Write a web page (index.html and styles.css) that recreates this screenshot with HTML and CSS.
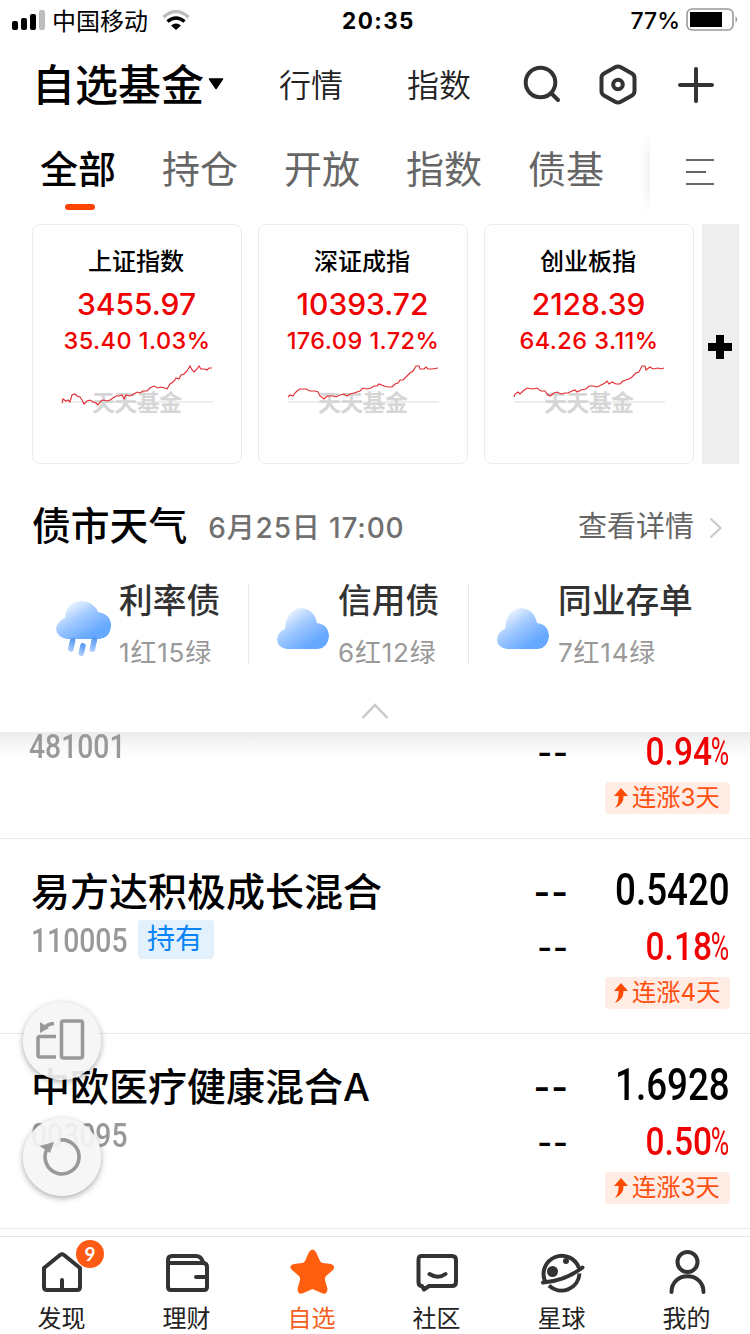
FILE: index.html
```html
<!DOCTYPE html>
<html lang="zh-CN">
<head>
<meta charset="utf-8">
<title>自选基金</title>
<link rel="stylesheet" href="styles.css">
</head>
<body>
<div class="app">
  <header class="status">
    <div class="status-left">
      <svg class="signal" width="34" height="20" viewBox="0 0 34 20"><rect x="0" y="11" width="6" height="9" rx="2"/><rect x="9" y="8" width="6" height="12" rx="2"/><rect x="18" y="4" width="6" height="16" rx="2"/><rect x="27" y="0" width="6" height="20" rx="2" fill="#bdbdbd"/></svg>
      <span class="carrier">中国移动</span>
      <svg class="wifi" width="28" height="20" viewBox="0 0 28 20"><path d="M1.500 7.200Q14-4 26.500 7.200" fill="none" stroke="#bdbdbd" stroke-width="3.400"/><path d="M5.500 11.500Q14 4.300 22.500 11.500" fill="none" stroke="#000" stroke-width="3.400"/><path d="M9 15.500Q14 11.500 19 15.500L14 20Z"/></svg>
    </div>
    <span class="clock">20:35</span>
    <div class="status-right">
      <span class="percent">77%</span>
      <svg width="53" height="24" viewBox="0 0 53 24"><rect x="1" y="1" width="46" height="21" rx="5" fill="none" stroke="#999" stroke-width="1.600"/><rect x="4" y="4" width="32" height="15"/><path d="M49.500 8Q53 11.500 49.500 15Z" fill="#999"/></svg>
    </div>
  </header>

  <nav class="topnav">
    <h1 class="title">自选基金</h1>
    <svg class="caret" width="16" height="12" viewBox="0 0 16 12"><path d="M1.500 1H14.500L8 10.500Z" stroke="#000" stroke-width="1.500" stroke-linejoin="round"/></svg>
    <span class="navlink first">行情</span>
    <span class="navlink">指数</span>
    <svg class="nav-icons" width="194" height="44" viewBox="520 62 194 44" fill="none" stroke="#333" stroke-width="4" stroke-linecap="round" stroke-linejoin="round">
      <circle cx="540.500" cy="82.500" r="14.800"/><path d="M551.500 93.500L558 100"/>
      <path d="M615.200 67.200Q618 65.600 620.800 67.200L632 73.500Q634.500 75 634.500 78V91Q634.500 94 632 95.500L620.800 101.800Q618 103.400 615.200 101.800L604 95.500Q601.500 94 601.500 91V78Q601.500 75 604 73.500Z"/><circle cx="618" cy="84.500" r="4.800"/>
      <path d="M680 85H712M696 69V101"/>
    </svg>
  </nav>

  <div class="tabs">
    <span class="tab active">全部</span>
    <span class="tab">持仓</span>
    <span class="tab">开放</span>
    <span class="tab">指数</span>
    <span class="tab">债基</span>
    <div class="tabs-more"><svg width="28" height="28" viewBox="0 0 28 28" fill="none" stroke="#666" stroke-width="2"><path d="M0 2H28M0 14H20M0 26H28"/></svg></div>
  </div>

  <section class="indices">
    <article class="card">
      <span class="card-name">上证指数</span>
      <span class="card-value">3455.97</span>
      <span class="card-change">35.40 1.03%</span>
      <svg class="spark" width="154" height="54" viewBox="60 362 154 54"><path class="base" d="M62 402H213"/><text x="92" y="410.500" textLength="90">天天基金</text><path class="line" d="M62 403L63 399L66 401L68 400L70 402L72 395L75 394L77 396L80 397L82 400L84 404L87 401L90 400L93 402L96 403L98 405L101 401L104 400L107 401L110 400L113 398L116 396L119 396L122 395L124 399L126 395L130 396L134 394L137 392L140 393L143 391L147 391L150 388L154 386L158 388L161 387L165 388L167 389L170 384L173 382L175 380L176 378L179 379L181 375L184 374L187 371L190 366L192 370L194 372L197 369L199 366L201 369L205 369L207 370L209 368L212 368"/></svg>
    </article>
    <article class="card">
      <span class="card-name">深证成指</span>
      <span class="card-value">10393.72</span>
      <span class="card-change">176.09 1.72%</span>
      <svg class="spark" width="154" height="54" viewBox="60 362 154 54"><path class="base" d="M62 402H213"/><text x="92" y="410.500" textLength="90">天天基金</text><path class="line" d="M62 397L64 395L67 396L69 393L71 391L74 389L80 389L84 391L89 391L92 392L94 396L98 399L101 396L107 396L110 397L114 395L118 394L121 396L124 394L128 393L131 392L134 391L137 388L141 389L145 388L148 386L151 386L153 384L158 386L162 387L166 387L169 384L172 383L174 380L177 380L180 377L184 373L187 371L190 366L193 366L194 369L198 369L200 367L202 369L206 369L212 368"/></svg>
    </article>
    <article class="card">
      <span class="card-name">创业板指</span>
      <span class="card-value">2128.39</span>
      <span class="card-change">64.26 3.11%</span>
      <svg class="spark" width="154" height="54" viewBox="60 362 154 54"><path class="base" d="M62 402H213"/><text x="92" y="410.500" textLength="90">天天基金</text><path class="line" d="M62 397L63 394L66 392L68 394L71 391L75 388L81 389L85 388L89 391L93 391L95 394L98 396L102 393L105 392L109 394L113 393L116 393L120 391L123 390L125 392L129 390L134 389L137 386L141 386L145 387L149 385L153 383L155 381L157 384L160 382L164 384L168 384L171 381L174 380L177 379L180 377L184 373L187 372L190 366L193 366L194 370L198 367L201 369L206 368L209 369L212 368"/></svg>
    </article>
    <div class="add-index"><svg width="24" height="24" viewBox="0 0 24 24"><path d="M8 0H16V8H24V16H16V24H8V16H0V8H8Z"/></svg></div>
  </section>

  <section class="weather">
    <div class="weather-head">
      <h2 class="weather-title">债市天气</h2>
      <span class="weather-date">6月25日 17:00</span>
      <span class="weather-more">查看详情</span>
      <svg width="14" height="22" viewBox="0 0 14 22" fill="none" stroke="#c8c8c8" stroke-width="2"><path d="M1.500 1.500L11.500 11L1.500 20.500"/></svg>
    </div>
    <div class="weather-items">
      <div class="weather-item rate">
        <svg class="cloud" width="60" height="60" viewBox="54 598 60 60">
          <defs><linearGradient id="sky" x1="0.100" y1="0.150" x2="0.700" y2="0.850"><stop offset="0" stop-color="#f2f8ff"/><stop offset=".45" stop-color="#a5cbff"/><stop offset="1" stop-color="#65a8ff"/></linearGradient><linearGradient id="rain" x1="0" y1="0" x2="0" y2="1"><stop offset="0" stop-color="#4f93ee"/><stop offset="1" stop-color="#b0d1ff"/></linearGradient></defs>
          <path fill="url(#sky)" d="M67 639Q57 637 56 629Q57 621 65 618Q66 602 82 601Q94 602 98 612Q111 614 111 626Q110 638 99 639Z"/>
          <g fill="url(#rain)"><rect x="69" y="638" width="5.500" height="14" rx="2.700" transform="rotate(12 72 645)"/><rect x="79.500" y="643" width="5.500" height="13" rx="2.700" transform="rotate(12 82 649)"/><rect x="90.500" y="637" width="5.500" height="15" rx="2.700" transform="rotate(12 93 645)"/></g>
        </svg>
        <div class="weather-text"><span class="kind">利率债</span><span class="count">1红15绿</span></div>
      </div>
      <div class="weather-item credit">
        <svg class="cloud" width="60" height="60" viewBox="273 598 60 60"><path fill="url(#sky)" d="M287 649Q278 648 277 640Q277 632 285 629Q286 610 301 608Q314 609 317 623Q328 624 329 636Q328 648 318 649Z"/></svg>
        <div class="weather-text"><span class="kind">信用债</span><span class="count">6红12绿</span></div>
      </div>
      <div class="weather-item deposit">
        <svg class="cloud" width="60" height="60" viewBox="273 598 60 60"><path fill="url(#sky)" d="M287 649Q278 648 277 640Q277 632 285 629Q286 610 301 608Q314 609 317 623Q328 624 329 636Q328 648 318 649Z"/></svg>
        <div class="weather-text"><span class="kind">同业存单</span><span class="count">7红14绿</span></div>
      </div>
    </div>
    <div class="collapse"><svg width="28" height="18" viewBox="0 0 28 18" fill="none" stroke="#c8c8c8" stroke-width="2.500"><path d="M1.500 16L14 3L26.500 16"/></svg></div>
  </section>

  <main class="funds">
    <article class="fund partial">
      <div class="fund-info"><div class="fund-meta"><span class="code">481001</span></div></div>
      <div class="fund-est"><span class="dash small">--</span></div>
      <div class="fund-nav">
        <span class="pct">0.94<i>%</i></span>
        <span class="streak"><svg width="16" height="22" viewBox="0 0 16 22"><path d="M8 1L15 9H10.500Q11 17 2 21Q6 16 5.500 9H1Z"/></svg>连涨3天</span>
      </div>
    </article>
    <article class="fund">
      <div class="fund-info"><span class="fund-name">易方达积极成长混合</span><div class="fund-meta"><span class="code">110005</span><span class="held">持有</span></div></div>
      <div class="fund-est"><span class="dash">--</span><span class="dash small">--</span></div>
      <div class="fund-nav">
        <span class="nav-value">0.5420</span><span class="pct">0.18<i>%</i></span>
        <span class="streak"><svg width="16" height="22" viewBox="0 0 16 22"><path d="M8 1L15 9H10.500Q11 17 2 21Q6 16 5.500 9H1Z"/></svg>连涨4天</span>
      </div>
    </article>
    <article class="fund">
      <div class="fund-info"><span class="fund-name">中欧医疗健康混合<span class="latin">A</span></span><div class="fund-meta"><span class="code">003095</span></div></div>
      <div class="fund-est"><span class="dash">--</span><span class="dash small">--</span></div>
      <div class="fund-nav">
        <span class="nav-value">1.6928</span><span class="pct">0.50<i>%</i></span>
        <span class="streak"><svg width="16" height="22" viewBox="0 0 16 22"><path d="M8 1L15 9H10.500Q11 17 2 21Q6 16 5.500 9H1Z"/></svg>连涨3天</span>
      </div>
    </article>
    <div class="floaters">
      <span class="floater"><svg width="78" height="78" viewBox="23 1003 78 78" fill="none" stroke="#999" stroke-width="3.600"><rect x="61.500" y="1022" width="21" height="37" rx="2"/><path d="M56 1037.500H40Q38 1037.500 38 1039.500V1056Q38 1058 40 1058H56"/><path d="M54 1024.500Q47 1025 43 1030"/><path d="M40 1023V1034L49 1029Z" fill="#999" stroke="none"/></svg></span>
      <span class="floater"><svg width="78" height="78" viewBox="23 1119 78 78" fill="none" stroke="#999" stroke-width="3.600"><path d="M60.500 1141A17 17 0 1 1 47 1150"/><path d="M39.500 1147L54 1143L50 1154Z" fill="#999" stroke="none"/></svg></span>
    </div>
  </main>

  <footer class="tabbar">
    <div class="tabitem"><svg width="48" height="48" viewBox="38 1248 48 48"><path d="M44 1268L60 1255Q62 1253.500 64 1255L80 1268V1287Q80 1290 77 1290H47Q44 1290 44 1287ZM62 1289V1280"/></svg><span>发现</span><b class="badge">9</b></div>
    <div class="tabitem"><svg width="48" height="48" viewBox="163 1248 48 48"><path d="M168 1263H203Q207 1263 207 1267V1287Q207 1290 204 1290H171Q168 1290 168 1287V1260Q168 1256 172 1256H196Q201 1256 203 1262M207 1277H196"/></svg><span>理财</span></div>
    <div class="tabitem active"><svg width="48" height="48" viewBox="288 1248 48 48"><path d="M309 1252Q312.500 1247 316 1252L320 1261Q321 1263 323 1263L331 1264Q336 1265.500 333 1270L326 1276Q324.500 1278 325 1280L327.500 1289Q327 1295.500 321.500 1293L312.500 1289L303.500 1293Q298 1295.500 297.500 1289L300 1280Q300.500 1278 299 1276L292 1270Q288 1265.500 294 1264L302 1263Q304 1263 305 1261Z"/></svg><span>自选</span></div>
    <div class="tabitem"><svg width="48" height="48" viewBox="413 1248 48 48"><path d="M421 1256H452Q456 1256 456 1260V1282Q456 1286 452 1286H429L424 1289.500L422 1286Q418.500 1286 418.500 1282V1260Q418.500 1256 421 1256ZM429.500 1274Q438 1279.500 445.500 1274"/></svg><span>社区</span></div>
    <div class="tabitem"><svg width="48" height="48" viewBox="538 1248 48 48"><path d="M545 1281A18 18 0 1 1 578.500 1267"/><path stroke-linecap="butt" d="M549 1285.500A18 18 0 0 0 579.500 1273.500"/><path d="M543 1282.500Q565 1281 582.500 1267.500"/><circle class="solid" cx="552.500" cy="1271.500" r="5.500"/><circle class="solid" cx="566" cy="1261" r="3"/></svg><span>星球</span></div>
    <div class="tabitem"><svg width="48" height="48" viewBox="663 1248 48 48"><circle cx="687.500" cy="1262" r="10"/><path d="M671.500 1292C671.500 1271 703.500 1271 703.500 1292"/></svg><span>我的</span></div>
  </footer>
</div>
</body>
</html>
```
FILE: styles.css
```css
* { box-sizing: border-box; }
body { margin: 0; background: #fff; font-family: "Noto Sans CJK SC", sans-serif; font-weight: 400; color: #000; }
h1, h2 { margin: 0; }
svg { display: block; flex: none; }
span { white-space: nowrap; }
.app { width: 750px; height: 1334px; overflow: hidden; display: flex; flex-direction: column; }

.status { height: 40px; flex: none; display: grid; grid-template-columns: 1fr 80px 1fr; align-items: center; padding: 0 11px 0 12px; font-family: Inter, sans-serif; }
.status-left, .status-right { display: flex; align-items: center; }
.status-right { justify-content: flex-end; gap: 6px; }
.carrier { font: 400 24px/36px "Noto Sans CJK SC", sans-serif; margin: 0 14px 0 6px; }
.clock { text-align: center; font-weight: 700; font-size: 22.500px; letter-spacing: 1.400px; margin: 1px -3px 0 3px; }
.percent { font-size: 23px; font-weight: 500; margin-top: 1px; }

.topnav { height: 90px; flex: none; display: flex; align-items: center; padding-left: 32px; }
.title { font-size: 43px; font-weight: 500; line-height: 60px; margin-top: -7px; }
.caret { margin-left: 4px; margin-top: -2px; }
.navlink { font-size: 32px; font-weight: 350; color: #222; line-height: 44px; margin-left: 64px; margin-top: -4px; }
.navlink.first { margin-left: 55px; }
.nav-icons { margin-left: 49px; margin-top: -2px; }

.tabs { height: 94px; flex: none; display: flex; padding-left: 40px; gap: 46px; }
.tab { width: 76px; font-size: 38px; line-height: 74px; height: 74px; color: #666; }
.tab.active { color: #000; font-weight: 500; }
.tab.active::after { content: ""; display: block; width: 30px; height: 6px; margin: 0 auto; transform: translateX(2px); border-radius: 3px; background: #ff4400; }
.tabs-more { width: 100px; height: 84px; padding: 28px 0 0 36px; background: #fff; position: relative; }
.tabs-more::before { content: ""; position: absolute; right: 100%; top: 0; width: 10px; height: 84px; background: linear-gradient(to left, #f2f2f2, #fff); -webkit-mask-image: linear-gradient(transparent, #000 35%, #000 70%, transparent); mask-image: linear-gradient(transparent, #000 35%, #000 70%, transparent); }

.indices { display: flex; flex: none; height: 240px; padding-left: 32px; gap: 16px; }
.card { width: 210px; border: 1px solid #ececec; border-radius: 8px; display: flex; flex-direction: column; align-items: center; padding-top: 15px; }
.card-name { font-size: 24px; font-weight: 500; line-height: 40px; margin-right: 2px; }
.card-value { color: #f00000; font: 500 30px/44px Inter, sans-serif; margin-top: 2px; margin-right: 1px; }
.card-change { color: #f00000; font: 500 23.500px/30px Inter, sans-serif; letter-spacing: .45px; }
.spark { margin-top: 6px; }
.spark .base { stroke: #e8e8e8; stroke-width: 1.500; }
.spark text { font-size: 23px; font-weight: 700; fill: #d6d6d6; }
.spark .line { fill: none; stroke: #e02b30; stroke-width: 1.100; }
.add-index { width: 37px; margin-left: -8px; background: #eee; display: flex; align-items: center; justify-content: center; padding-top: 5px; padding-right: 2px; }

.weather { flex: none; height: 268px; display: flex; flex-direction: column; }
.weather-head { height: 120px; display: flex; align-items: center; padding: 0 27px 0 32px; }
.weather-title { font-size: 38.800px; font-weight: 500; line-height: 56px; margin-top: -3px; }
.weather-date { font: 500 28px/40px Inter, "Noto Sans CJK SC", sans-serif; letter-spacing: .85px; color: #707070; margin-left: 21px; margin-top: 8px; }
.weather-more { font-size: 29px; color: #666; line-height: 40px; margin-left: auto; margin-right: 15px; }
.weather-head svg { margin-top: 8px; }
.weather-items { height: 80px; display: flex; }
.weather-item { display: flex; padding-left: 54px; width: 249px; border-right: 1px solid #e8e8e8; }
.weather-item.credit { width: 220px; padding-left: 24px; }
.weather-item.deposit { border-right: 0; padding-left: 24px; }
.cloud { margin-top: 14px; margin-right: 5px; }
.weather-text { display: flex; flex-direction: column; gap: 14px; margin-top: -7px; }
.kind { font-size: 33.700px; line-height: 44px; color: #333; font-weight: 500; }
.count { font: 400 26px/36px Inter, "Noto Sans CJK SC", sans-serif; letter-spacing: .8px; color: #999; }
.collapse { display: flex; justify-content: center; padding-top: 38px; }

.funds { flex: none; height: 504px; position: relative; background: linear-gradient(#ebebeb, #f6f6f6 12px, #fff 26px); }
.fund { height: 195px; border-bottom: 1px solid #e8e8e8; display: grid; grid-template-columns: 1fr 110px 161px; padding: 21px 20px 0 31px; }
.fund.partial { height: 107px; padding: 0 20px 0 29px; }
.fund-info, .fund-est, .fund-nav { display: flex; flex-direction: column; }
.fund-est, .fund-nav { align-items: flex-end; }
.fund-name { font-size: 39px; font-weight: 500; line-height: 58px; height: 60px; }
.latin { font-family: Inter, sans-serif; font-size: 38px; }
.fund-meta { display: flex; height: 39px; gap: 13px; }
.partial .fund-meta { margin-top: -6px; }
.code { width: 94px; font: 500 33.500px/42px Roboto, sans-serif; color: #999; transform: scaleX(.845); transform-origin: left; }
.held { width: 76px; height: 39px; border-radius: 4px; background: #e3f1fd; color: #0a84f5; text-align: center; font-size: 28px; line-height: 35px; padding-right: 2px; }
.nav-value { font: 500 43.500px/61px Roboto, sans-serif; height: 60px; transform: scaleX(.845); transform-origin: right; }
.pct { font: 500 38.500px/53px Roboto, sans-serif; height: 52px; color: #f00000; transform: scaleX(.87); transform-origin: right; }
.pct i { display: inline-block; font-style: normal; font-weight: 400; transform: scaleX(.75); transform-origin: right; margin-left: -8px; }
.partial .pct { margin-top: -7px; }
.streak { width: 125px; height: 32px; margin-top: 5px; border-radius: 4px; background: #ffece5; color: #ff5010; display: flex; align-items: center; gap: 3px; padding: 0 0 2px 8px; font: 400 24.300px/30px Inter, "Noto Sans CJK SC", sans-serif; }
.streak svg { fill: #ff4a00; margin-top: 2px; }
.dash { font: 600 36px/64px Inter, sans-serif; height: 60px; letter-spacing: 1px; }
.dash.small { font-size: 32px; line-height: 55px; height: 52px; }
.partial .dash.small { margin-top: -7px; }

.floaters { position: absolute; left: 23px; top: 270px; display: flex; flex-direction: column; gap: 38px; }
.floater { width: 78px; height: 78px; border-radius: 50%; background: rgba(245,245,245,.92); box-shadow: 0 2px 6px rgba(0,0,0,.35); }

.tabbar { flex: none; height: 98px; border-top: 1px solid #e5e5e5; display: grid; grid-template-columns: repeat(6, 125px); }
.tabitem { position: relative; display: flex; flex-direction: column; align-items: center; padding: 11px 1px 0 0; font-size: 24px; color: #222; }
.tabitem span { line-height: 36px; margin-top: 3px; margin-right: 1px; }
.tabitem svg { fill: none; stroke: #333; stroke-width: 4; stroke-linecap: round; stroke-linejoin: round; }
.tabitem svg .solid { fill: #333; stroke: none; }
.tabitem.active { color: #f4601e; }
.tabitem.active svg { fill: #ff5f0f; stroke: none; }
.badge { position: absolute; left: 76px; top: 3px; width: 28px; height: 28px; border-radius: 50%; background: #ff5a14; color: #fff; font: 700 19px/28px Lato, sans-serif; text-align: center; }
```
